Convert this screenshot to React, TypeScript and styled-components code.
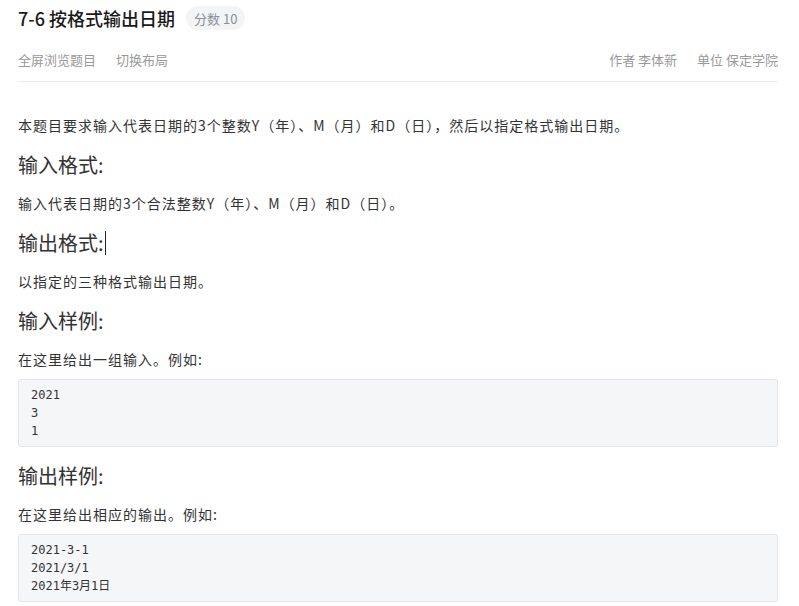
import React from 'react'
import styled, { createGlobalStyle } from 'styled-components'

const GlobalStyle = createGlobalStyle`
    body {
        margin: 0;
        background: #fff;
        font-family: 'Noto Sans CJK SC', 'Noto Sans', sans-serif;
        color: #333;
    }
`

const Page = styled.div`
    width: 760px;
    padding: 0 21px 0 18px;
`

const TitleRow = styled.div`
    display: flex;
    align-items: center;
    height: 36px;
    gap: 11px;
`

const Title = styled.h1`
    margin: 0;
    font-size: 18px;
    line-height: 24px;
    font-weight: 500;
    color: #1a1a1a;
`

const Score = styled.span`
    display: inline-flex;
    align-items: center;
    height: 24px;
    padding: 0 8px;
    border-radius: 12px;
    background: #f3f4f6;
    color: #8a8f99;
    font-size: 13px;
`

const MetaBar = styled.div`
    display: flex;
    justify-content: space-between;
    align-items: center;
    height: 44px;
    margin-top: 1px;
    border-bottom: 1px solid #ebebeb;
`

const MetaGroup = styled.div`
    display: flex;
    gap: 20px;
    font-size: 13px;
    color: #999;
`

const Content = styled.div`
    padding-top: 32px;
`

const Para = styled.p`
    margin: 0 0 9px;
    font-size: 14px;
    line-height: 22px;
    letter-spacing: 1px;
    color: #333;
`

const Heading = styled.h3`
    margin: 15px 0 13px;
    font-size: 20px;
    line-height: 28px;
    font-weight: 400;
    color: #333;
    display: flex;
    align-items: center;
`

const Caret = styled.span`
    display: inline-block;
    width: 0;
    height: 24px;
    margin-left: 1px;
    border-left: 1px solid #222;
`

const Code = styled.pre`
    margin: 0;
    padding: 6px 12px 6px;
    background: #f5f6f8;
    border: 1px solid #e4e5e8;
    border-radius: 3px;
    font-family: 'DejaVu Sans Mono', 'Noto Sans CJK SC', monospace;
    font-size: 12px;
    line-height: 18px;
    color: #333;
`

export default function App() {
    return (
        <Page>
            <GlobalStyle />
            <TitleRow>
                <Title>7-6 按格式输出日期</Title>
                <Score>分数 10</Score>
            </TitleRow>
            <MetaBar>
                <MetaGroup>
                    <span>全屏浏览题目</span>
                    <span>切换布局</span>
                </MetaGroup>
                <MetaGroup>
                    <span>作者 李体新</span>
                    <span>单位 保定学院</span>
                </MetaGroup>
            </MetaBar>
            <Content>
                <Para>本题目要求输入代表日期的3个整数Y（年）、M（月）和D（日），然后以指定格式输出日期。</Para>
                <Heading>输入格式:</Heading>
                <Para>输入代表日期的3个合法整数Y（年）、M（月）和D（日）。</Para>
                <Heading>
                    输出格式:<Caret />
                </Heading>
                <Para>以指定的三种格式输出日期。</Para>
                <Heading>输入样例:</Heading>
                <Para>在这里给出一组输入。例如:</Para>
                <Code>{'2021\n3\n1'}</Code>
                <Heading>输出样例:</Heading>
                <Para>在这里给出相应的输出。例如:</Para>
                <Code>{'2021-3-1\n2021/3/1\n2021年3月1日'}</Code>
            </Content>
        </Page>
    )
}
